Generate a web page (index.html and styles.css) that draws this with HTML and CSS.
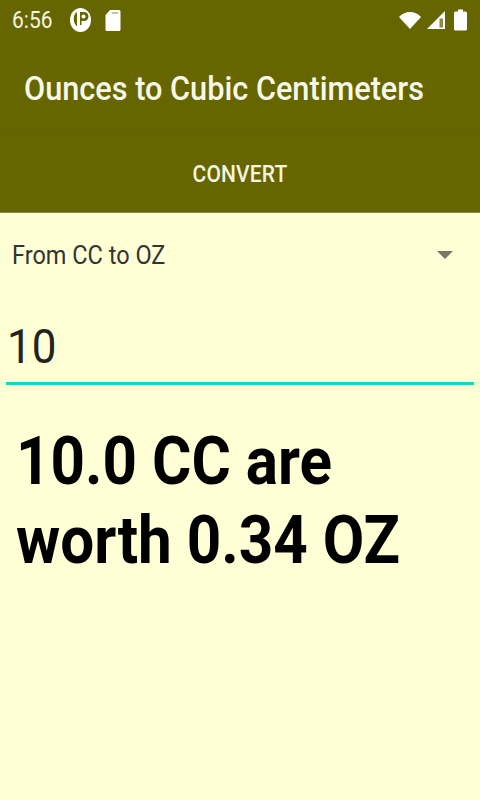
FILE: index.html
```html
<!DOCTYPE html>
<html lang="en">
<head>
    <meta charset="UTF-8">
    <meta name="viewport" content="width=device-width, initial-scale=1.0">
    <title>Ounces to Cubic Centimeters</title>
    <link rel="stylesheet" href="styles.css">
</head>
<body>
    <div class="container">
        <div class="status-bar">
            <span class="time">6:56</span>
            <svg class="icon-p" width="21" height="24" viewBox="0 0 21 24">
                <ellipse cx="10.500" cy="12" rx="10.500" ry="12" fill="#fff"/>
                <path d="M7 4C3 6 2.500 14 6.500 18L7 18z" fill="#666600"/>
                <path d="M10 4h4a4 4 0 0 1 0 9h-2.500v4H10z" fill="#666600"/>
                <circle cx="13.500" cy="8.500" r="2" fill="#fff"/>
            </svg>
            <svg class="icon-sd" width="16" height="22" viewBox="0 0 16 22">
                <path d="M5 1h9a1.500 1.500 0 0 1 1.500 1.500v18a1.500 1.500 0 0 1-1.500 1.500H2a1.500 1.500 0 0 1-1.500-1.500V6z" fill="#fff"/>
                <path d="M7 4h6" stroke="#b3b37f" stroke-width="1.500"/>
            </svg>
            <span class="spacer"></span>
            <svg class="icon-wifi" width="22" height="18" viewBox="0 0 22 18">
                <path d="M0 6C3 2.500 7 1 11 1s8 1.500 11 5L11 18z" fill="#fff"/>
            </svg>
            <svg class="icon-signal" width="20" height="20" viewBox="0 0 20 20">
                <path d="M1 19L19 1v18z" fill="#fff"/>
                <path d="M13.500 8.500h3.500v9h-3.500z" fill="#8a8a40"/>
            </svg>
            <svg class="icon-battery" width="13" height="22" viewBox="0 0 13 22">
                <path d="M4 0.500h5v2h2.500a1.500 1.500 0 0 1 1.500 1.500v16a1.500 1.500 0 0 1-1.500 1.500H1.500A1.500 1.500 0 0 1 0 20V4a1.500 1.500 0 0 1 1.500-1.500H4z" fill="#fff"/>
            </svg>
        </div>
        <div class="app-bar">
            <h1>Ounces to Cubic Centimeters</h1>
        </div>
        <div class="tab-bar">
            <span class="tab">CONVERT</span>
        </div>
        <div class="content">
            <div class="spinner">
                <span class="tall">From CC to OZ</span>
                <span class="arrow"></span>
            </div>
            <div class="field"><span class="tall">10</span></div>
            <p class="result">10.0 CC are<br>worth 0.34 OZ</p>
        </div>
    </div>
</body>
</html>
```
FILE: styles.css
```css
body {
    font-family: Roboto, sans-serif;
    margin: 0;
    padding: 0;
    background-color: #ffffd6;
}

.container {
    display: flex;
    flex-direction: column;
    height: 800px;
    overflow: hidden;
}

.status-bar {
    display: flex;
    align-items: center;
    height: 40px;
    padding: 0 13px 0 12px;
    box-sizing: border-box;
    background-color: #666600;
    color: #f5f5e0;
}

.time {
    display: inline-block;
    font-size: 21px;
    margin-right: 17px;
    transform: scaleY(1.1);
}

.icon-p {
    margin-right: 14px;
}

.spacer {
    flex-grow: 1;
}

.icon-wifi {
    margin-right: 5px;
}

.icon-signal {
    margin-right: 8px;
}

.app-bar {
    display: flex;
    align-items: center;
    height: 96px;
    padding: 2px 24px 0;
    box-sizing: border-box;
    background-color: #666600;
    border-bottom: 1px solid #626200;
}

h1 {
    margin: 0;
    font-size: 30.700px;
    font-weight: 500;
    color: #f8f8ea;
    white-space: nowrap;
    transform: scaleY(1.1);
}

.tab-bar {
    display: flex;
    align-items: center;
    justify-content: center;
    height: 76px;
    background-color: #666600;
    border-bottom: 1px solid #8a8a40;
}

.tab {
    display: inline-block;
    font-size: 21px;
    font-weight: 500;
    letter-spacing: 0.150px;
    color: #f5f5e0;
    transform: scaleY(1.1);
}

.content {
    flex-grow: 1;
    padding: 0 6px;
}

.tall {
    display: inline-block;
    transform: scaleY(1.1);
}

.spinner {
    display: flex;
    align-items: center;
    justify-content: space-between;
    height: 83px;
    padding: 0 21px 0 6px;
    font-size: 23.500px;
    color: #333;
}

.arrow {
    width: 0;
    height: 0;
    border-left: 8px solid transparent;
    border-right: 8px solid transparent;
    border-top: 8px solid #77776a;
}

.field {
    height: 89px;
    padding: 0 1px;
    box-sizing: border-box;
    border-bottom: 3px solid #11d9c9;
    font-size: 44px;
    line-height: 100px;
    color: #222;
}

.result {
    margin: 37px 0 0 10px;
    font-size: 60.200px;
    font-weight: 700;
    line-height: 72px;
    color: #000;
    white-space: nowrap;
    transform: scaleY(1.1);
    transform-origin: left top;
}
```
